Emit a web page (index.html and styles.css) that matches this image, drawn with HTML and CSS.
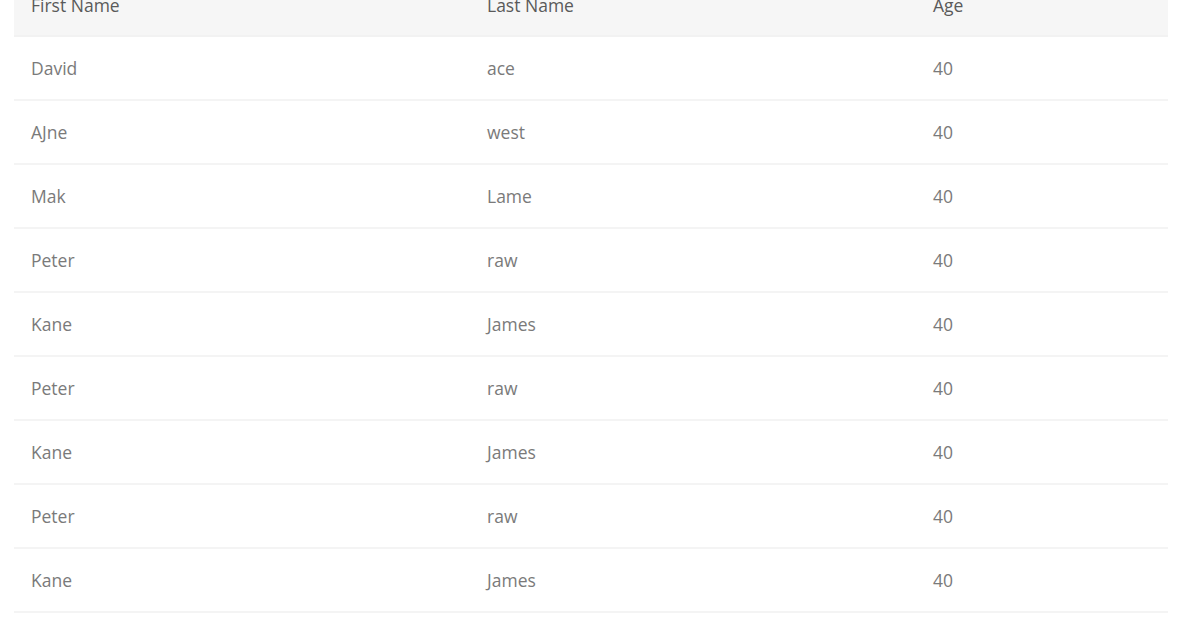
FILE: index.html
```html
<!DOCTYPE html>
<html>
<head>
<meta charset="utf-8">
<link rel="stylesheet" href="styles.css">
</head>
<body>
<div class="page">
  <table class="grid">
    <thead>
      <tr><th class="c1">First Name</th><th class="c2">Last Name</th><th class="c3">Age</th></tr>
    </thead>
    <tbody>
      <tr><td>David</td><td>ace</td><td>40</td></tr>
      <tr><td>AJne</td><td>west</td><td>40</td></tr>
      <tr><td>Mak</td><td>Lame</td><td>40</td></tr>
      <tr><td>Peter</td><td>raw</td><td>40</td></tr>
      <tr><td>Kane</td><td>James</td><td>40</td></tr>
      <tr><td>Peter</td><td>raw</td><td>40</td></tr>
      <tr><td>Kane</td><td>James</td><td>40</td></tr>
      <tr><td>Peter</td><td>raw</td><td>40</td></tr>
      <tr><td>Kane</td><td>James</td><td>40</td></tr>
    </tbody>
  </table>
</div>
</body>
</html>
```

FILE: styles.css
```css
html, body {
  margin: 0;
  padding: 0;
  background: #ffffff;
  overflow: hidden;
}
.page {
  padding: 0 28px 0 14px;
}
.grid {
  width: 100%;
  margin-top: -26px;
  border-collapse: collapse;
  table-layout: fixed;
  font-family: "Open Sans", "Liberation Sans", sans-serif;
  font-size: 17.5px;
}
.c1 { width: 456px; }
.c2 { width: 446px; }
.c3 { width: auto; }
.grid th {
  background: #f6f6f6;
  color: #5a5a5a;
  font-weight: 400;
  text-align: left;
  height: 62px;
  padding: 0 17px;
  box-sizing: border-box;
  border-bottom: 2px solid #f2f2f2;
}
.grid td {
  color: #7a7a7a;
  height: 64px;
  padding: 0 17px;
  box-sizing: border-box;
  border-bottom: 2px solid #f4f4f4;
}
```
